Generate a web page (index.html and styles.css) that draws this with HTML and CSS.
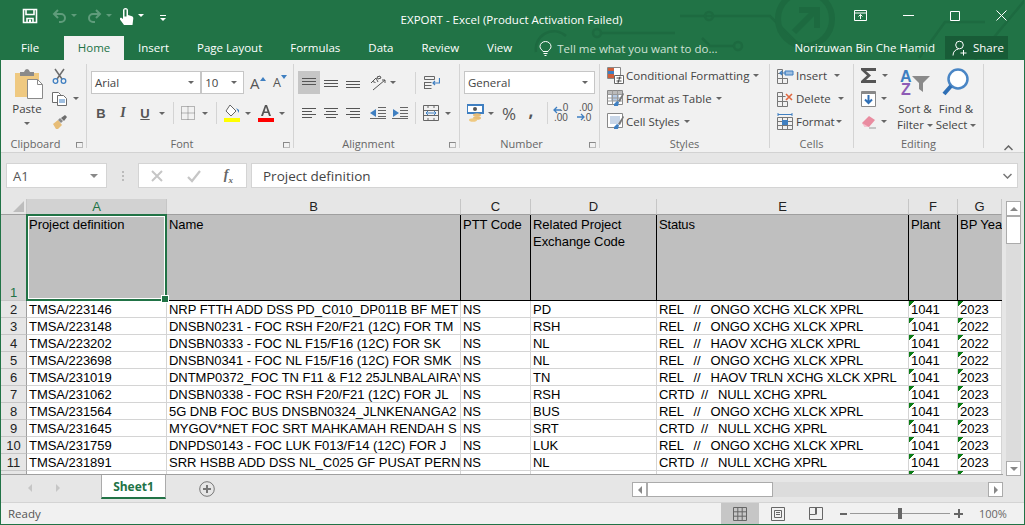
FILE: index.html
```html
<!DOCTYPE html>
<html lang="en">
<head>
  <meta charset="UTF-8">
  <title>EXPORT - Excel</title>
  <link rel="stylesheet" href="styles.css">
</head>
<body>
<div class="window">

  <!-- title bar and tabs share the green backdrop -->
  <header class="top">
    <svg class="circuit" width="1025" height="60" viewBox="0 0 1025 60" fill="none" stroke="#1d6a40" stroke-width="2.5">
      <path d="M536 52a18 18 0 0 1 30-16M600 33h75M680 16h90l30 30M737 16h-5M735 46h-25l-8-8M1025 0l-50 60M985 22h-40l-26 36" />
      <circle cx="709" cy="16" r="4"/><circle cx="738" cy="46" r="4"/><circle cx="597" cy="33" r="4"/>
      <circle cx="805" cy="19" r="27" stroke-width="6"/>
      <path d="M794 32l22-22M799 10h18v18" stroke-width="6"/>
    </svg>

    <div class="titlebar">
      <div class="qat">
        <svg class="q-save" width="16" height="16" viewBox="0 0 16 16" fill="none" stroke="#fff" stroke-width="1.6"><path d="M1.500 1.500h13v13h-13zM4 1.500v5h8v-5M5 14.500v-4h6v4"/><path d="M8 11.500v3" stroke-width="2"/></svg>
        <svg class="q-undo" width="15" height="14" viewBox="0 0 15 14" fill="none" stroke="#5f9c7b" stroke-width="2"><path d="M6 1L2 5l4 4M2 5h7a4 4 0 0 1 0 8H7"/></svg>
        <span class="caret dim"></span>
        <svg class="q-redo" width="15" height="14" viewBox="0 0 15 14" fill="none" stroke="#5f9c7b" stroke-width="2"><path d="M9 1l4 4-4 4M13 5H6a4 4 0 0 0 0 8h2"/></svg>
        <span class="caret dim"></span>
        <svg class="q-touch" width="15" height="17" viewBox="0 0 15 17" fill="#fff"><path d="M4 2.500a2.500 2.500 0 0 1 5 0V7l4 1.200q1.500.6 1.300 2.300L13.500 17H5L1 11.500q-.5-1.500 1-2l2 1.500z"/><path d="M5.500 1.500h2v7h-2z" fill="#217346"/></svg>
        <span class="caret white"></span>
        <span class="q-more"></span>
      </div>
      <div class="title">EXPORT - Excel (Product Activation Failed)</div>
      <div class="winctl">
        <svg width="13" height="11" viewBox="0 0 13 11" fill="none" stroke="#fff"><path d="M.5.500h12v10H.5zM.5 3h12M6.500 9V4.500M4.500 6.500l2-2 2 2"/></svg>
        <svg width="11" height="11" viewBox="0 0 11 11" stroke="#fff"><path d="M0 5.500h11"/></svg>
        <svg width="10" height="10" viewBox="0 0 10 10" fill="none" stroke="#fff"><path d="M.5.500h9v9h-9z"/></svg>
        <svg width="11" height="11" viewBox="0 0 11 11" stroke="#fff"><path d="M.5.500l10 10M10.500.500l-10 10"/></svg>
      </div>
    </div>

    <nav class="tabs">
      <span class="tab tab-file">File</span>
      <span class="tab tab-active">Home</span>
      <span class="tab">Insert</span>
      <span class="tab">Page Layout</span>
      <span class="tab">Formulas</span>
      <span class="tab">Data</span>
      <span class="tab">Review</span>
      <span class="tab">View</span>
      <span class="tell">
        <svg width="13" height="15" viewBox="0 0 13 15" fill="none" stroke="#fff"><path d="M4 10.500C3 8.500 1 8 1 5.500a5.500 5 0 0 1 11 0c0 2.500-2 3-3 5zM4.500 12.500h4M5.500 14.500h2"/></svg>
        Tell me what you want to do...
      </span>
      <span class="user">Norizuwan Bin Che Hamid</span>
      <span class="share">
        <svg width="16" height="16" viewBox="0 0 16 16" fill="none" stroke="#fff"><circle cx="7.500" cy="5" r="3.800"/><path d="M1 15.500c0-4 2.500-6 5.500-6.500M11.500 10v5.500M8.500 13h6"/></svg>
        Share
      </span>
    </nav>
  </header>

  <section class="ribbon">

    <div class="group g-clipboard">
      <div class="group-body clip-body">
        <div class="big paste">
          <svg width="30" height="31" viewBox="0 0 30 31"><path d="M1 5h24v24H1z" fill="#efc981"/><path d="M6 4h4q1-3 3-3t3 3h4v4H6z" fill="#8a8a8a"/><path d="M13.500 11.500h10l5 5v14h-15z" fill="#fff" stroke="#8a8a8a"/><path d="M23.500 11.500v5h5" fill="none" stroke="#8a8a8a"/></svg>
          <span class="big-text">Paste</span>
          <span class="caret"></span>
        </div>
        <div class="clip-tools">
          <div class="clip-row">
            <svg width="15" height="16" viewBox="0 0 15 16" fill="none"><path d="M3 1l7 10M12 1L5 11" stroke="#6d6d6d" stroke-width="1.500"/><circle cx="3.500" cy="13" r="2.300" stroke="#3f7fc1" stroke-width="1.300"/><circle cx="11.500" cy="13" r="2.300" stroke="#3f7fc1" stroke-width="1.300"/></svg>
          </div>
          <div class="clip-row">
            <svg width="15" height="14" viewBox="0 0 15 14" fill="#fff" stroke="#6d6d6d"><path d="M.5.500h6l2 2v8h-8z"/><path d="M5.500 3.500h6l3 3v7h-9z"/><path d="M7 8h6M7 10h6" stroke="#3f7fc1"/></svg>
            <span class="caret"></span>
          </div>
          <div class="clip-row">
            <svg width="16" height="15" viewBox="0 0 16 15"><path d="M1 10l5-4 4 5-4 4H4z" fill="#e7bd77"/><path d="M6 6l2-2 3 3-2 2z" fill="#8a8a8a"/><path d="M9 4l4-3 2 2-3 4z" fill="#6d6d6d"/></svg>
          </div>
        </div>
      </div>
      <div class="group-label"><span class="lbl">Clipboard</span><i class="launcher"></i></div>
    </div>

    <div class="group g-font">
      <div class="group-body">
        <div class="row row-top">
          <span class="combo font-name">Arial<span class="caret"></span></span>
          <span class="combo font-size">10<span class="caret"></span></span>
          <span class="grow">A<i class="up"></i></span>
          <span class="shrink">A<i class="down"></i></span>
        </div>
        <div class="row row-bottom font-tools">
          <span class="tool b">B</span>
          <span class="tool i">I</span>
          <span class="tool u">U</span>
          <span class="caret-box"><span class="caret"></span></span>
          <span class="sep sep-a"></span>
          <span class="tool">
            <svg width="14" height="14" viewBox="0 0 14 14" fill="none" stroke="#777" stroke-dasharray="1 1"><path d="M.5.500h13v13H.5zM.5 7h13M7 .5v13"/></svg>
          </span>
          <span class="caret-box"><span class="caret"></span></span>
          <span class="sep sep-b"></span>
          <span class="tool">
            <svg width="16" height="18" viewBox="0 0 16 18"><path d="M6 1l6 6-5 5-5-5z" fill="#fff" stroke="#666"/><path d="M12 4l3 2v3z" fill="#3f7fc1"/><path d="M0 14h16v4H0z" fill="#ffff00"/></svg>
          </span>
          <span class="caret-box narrow"><span class="caret"></span></span>
          <span class="tool color-a">
            <svg width="16" height="18" viewBox="0 0 16 18"><path d="M3 12L7 1h2l4 11h-2l-1-3H6l-1 3zM6.500 7.500h3L8 3z" fill="#555"/><path d="M0 14h16v4H0z" fill="#ff0000"/></svg>
          </span>
          <span class="caret-box narrow"><span class="caret"></span></span>
        </div>
      </div>
      <div class="group-label"><span class="lbl">Font</span><i class="launcher"></i></div>
    </div>

    <div class="group g-align">
      <div class="group-body">
        <div class="row row-top">
          <span class="tool tall on"><svg width="14" height="10" viewBox="0 0 14 10" stroke="#555"><path d="M0 .5h14M0 3.500h14M0 6.500h14"/></svg></span>
          <span class="tool tall"><svg width="14" height="10" viewBox="0 0 14 10" stroke="#555"><path d="M0 2.500h14M0 5.500h14M0 8.500h14"/></svg></span>
          <span class="tool tall"><svg width="14" height="10" viewBox="0 0 14 10" stroke="#555"><path d="M0 3.500h14M0 6.500h14M0 9.500h14"/></svg></span>
          <span class="tool tall orient">
            <svg width="16" height="16" viewBox="0 0 16 16" fill="none" stroke="#555"><path d="M1 8l5-5 2 4M2.500 6.500l3 1M7 2l3-1 1 2-3 1zM3 15L15 5M15 5h-3M15 5v3"/></svg>
          </span>
          <span class="caret-box small"><span class="caret"></span></span>
          <span class="sep sep-wrap"></span>
          <span class="tool tall">
            <svg width="16" height="15" viewBox="0 0 16 15" fill="none" stroke="#666"><path d="M.5 1.500h10v3H.5zM.5 7.500h7M.5 10.500h7M.5 13.500h7M.5 7v7"/><path d="M15.500 3v5H9M11 6l-2 2 2 2" stroke="#3f7fc1" stroke-width="1.200"/></svg>
          </span>
        </div>
        <div class="row row-bottom">
          <span class="tool"><svg width="14" height="11" viewBox="0 0 14 11" stroke="#555"><path d="M0 .5h14M0 3.500h10M0 6.500h14M0 9.500h10"/></svg></span>
          <span class="tool"><svg width="14" height="11" viewBox="0 0 14 11" stroke="#555"><path d="M0 .5h14M2 3.500h10M0 6.500h14M2 9.500h10"/></svg></span>
          <span class="tool"><svg width="14" height="11" viewBox="0 0 14 11" stroke="#555"><path d="M0 .5h14M4 3.500h10M0 6.500h14M4 9.500h10"/></svg></span>
          <span class="tool orient">
            <svg width="16" height="12" viewBox="0 0 16 12"><path d="M8 .5h8M8 3.500h8M8 6.500h8M8 9.500h8M0 11.500h16" stroke="#666"/><path d="M6 2v8L0 6z" fill="#3f7fc1"/></svg>
          </span>
          <span class="tool">
            <svg width="16" height="12" viewBox="0 0 16 12"><path d="M8 .5h8M8 3.500h8M8 6.500h8M8 9.500h8M0 11.500h16" stroke="#666"/><path d="M1 2v8l6-4z" fill="#3f7fc1"/></svg>
          </span>
          <span class="sep sep-merge"></span>
          <span class="tool">
            <svg width="16" height="16" viewBox="0 0 16 16" fill="none" stroke="#666"><path d="M.5.500h15v15H.5zM.5 5.500h15M.5 10.500h15M5 3V.5M11 3V.5M5 13v2.500M11 13v2.500"/><path d="M3 8h10M5 6l-2 2 2 2M11 6l2 2-2 2" stroke="#3f7fc1"/></svg>
          </span>
          <span class="caret-box"><span class="caret"></span></span>
        </div>
      </div>
      <div class="group-label"><span class="lbl">Alignment</span><i class="launcher"></i></div>
    </div>

    <div class="group g-number">
      <div class="group-body">
        <div class="row row-top">
          <span class="combo format-name">General<span class="caret"></span></span>
        </div>
        <div class="row row-bottom">
          <span class="tool">
            <svg width="17" height="18" viewBox="0 0 17 18"><path d="M0 1h16v8H0z" fill="#fff" stroke="#3f7fc1" stroke-width="2"/><circle cx="8" cy="5" r="2" fill="#555"/><ellipse cx="10" cy="11" rx="4" ry="1.800" fill="#e7bd77"/><ellipse cx="10" cy="14" rx="4" ry="1.800" fill="#e7bd77"/><ellipse cx="6" cy="16" rx="4" ry="1.800" fill="#efc981"/></svg>
          </span>
          <span class="caret-box narrow"><span class="caret"></span></span>
          <span class="tool pct">%</span>
          <span class="tool comma">,</span>
          <span class="sep sep-dec"></span>
          <span class="tool dec">
            <svg width="17" height="15" viewBox="0 0 17 15"><path d="M1 4h7M4 1L1 4l3 3" fill="none" stroke="#3f7fc1" stroke-width="1.300"/></svg>
            <span class="dec-top">.0</span><span class="dec-bot">.00</span>
          </span>
          <span class="tool dec">
            <svg width="17" height="15" viewBox="0 0 17 15"><path d="M1 11h7M5 8l3 3-3 3" fill="none" stroke="#3f7fc1" stroke-width="1.300"/></svg>
            <span class="dec-top right">.00</span><span class="dec-bot right">.0</span>
          </span>
        </div>
      </div>
      <div class="group-label"><span class="lbl">Number</span><i class="launcher"></i></div>
    </div>

    <div class="group g-styles">
      <div class="group-body stack">
        <div class="item">
          <svg width="17" height="17" viewBox="0 0 17 17"><path d="M.5.500h13v11H.5z" fill="#fff" stroke="#888"/><path d="M1 1h6v3H1z" fill="#d0603c"/><path d="M1 4h6v3H1z" fill="#3f7fc1"/><path d="M1 7h6v4H1z" fill="#d0603c"/><path d="M7.500 8.500h9v8h-9z" fill="#fff" stroke="#666"/><path d="M9.500 11h5M9.500 14h5M13 9.500l-2 6.500" stroke="#444" fill="none"/></svg>
          <span>Conditional Formatting</span><span class="caret"></span>
        </div>
        <div class="item">
          <svg width="17" height="17" viewBox="0 0 17 17"><path d="M.5.500h15v14H.5z" fill="#fff" stroke="#888"/><path d="M1 1h14v3H1z" fill="#bbb"/><path d="M4 5h8v6H4z" fill="#b7cbe4"/><path d="M.5 4.500h15M.5 8h15M.5 11h15M5.500.5v14M10.500.5v14" stroke="#999" fill="none"/><path d="M7 14l3-3 2 1-1 4H7z" fill="#3f7fc1"/><path d="M11 11l5-8 1 1-4 8z" fill="#777"/></svg>
          <span>Format as Table</span><span class="caret"></span>
        </div>
        <div class="item">
          <svg width="17" height="17" viewBox="0 0 17 17"><path d="M.5.500h15v14H.5z" fill="#fff" stroke="#888"/><path d="M3 3h10v8H3z" fill="#c8d6e8"/><path d="M7 14l3-3 2 1-1 4H7z" fill="#3f7fc1"/><path d="M11 11l5-8 1 1-4 8z" fill="#777"/></svg>
          <span>Cell Styles</span><span class="caret"></span>
        </div>
      </div>
      <div class="group-label"><span class="lbl">Styles</span></div>
    </div>

    <div class="group g-cells">
      <div class="group-body stack">
        <div class="item">
          <svg width="17" height="16" viewBox="0 0 17 16" fill="none" stroke="#777"><path d="M.5 1.500h5v4h-5zM.5 5.500h5v5h-5zM.5 10.500h5v5h-5zM5.500 10.500h5v5h-5z"/><path d="M8 3h8v4H8z" fill="#9fbfe0" stroke="#3f7fc1"/><path d="M9 5H3M5 3L3 5l2 2" stroke="#3f7fc1" stroke-width="1.200"/></svg>
          <span class="item-name ins">Insert</span><span class="caret"></span>
        </div>
        <div class="item">
          <svg width="17" height="16" viewBox="0 0 17 16" fill="none" stroke="#777"><path d="M.5 1.500h5v4h-5zM.5 5.500h5v5h-5zM.5 10.500h5v5h-5zM5.500 10.500h5v5h-5zM5.500 5.500h3"/><path d="M9 3l6 6M15 3l-6 6" stroke="#e0673f" stroke-width="1.600"/></svg>
          <span class="item-name del">Delete</span><span class="caret"></span>
        </div>
        <div class="item">
          <svg width="17" height="17" viewBox="0 0 17 17" fill="none" stroke="#777"><path d="M.5 4.500h15v12H.5zM.5 8.500h15M.5 12.500h15M5.500 4.500v12M10.500 4.500v12"/><path d="M1 1.500h14M1 0v3M15 0v3" stroke="#3f7fc1"/><path d="M5 7h6v5H5z" fill="#3f7fc1" stroke="none"/></svg>
          <span class="item-name fmt">Format</span><span class="caret"></span>
        </div>
      </div>
      <div class="group-label"><span class="lbl">Cells</span></div>
    </div>

    <div class="group g-editing">
      <div class="group-body edit-body">
        <div class="edit-tools">
          <div class="edit-row">
            <svg width="16" height="15" viewBox="0 0 16 15"><path d="M0 0h15v3H5l5 4.500L5 12h10v3H0v-2l6-5.500L0 2z" fill="#555"/></svg>
            <span class="caret"></span>
          </div>
          <div class="edit-row">
            <svg width="15" height="16" viewBox="0 0 15 16"><path d="M.5.500h14v15H.5z" fill="#fff" stroke="#888"/><path d="M1 1h13v2H1z" fill="#888"/><path d="M7.500 4v8M4 8.500l3.500 3.500L11 8.500" fill="none" stroke="#2f6fb5" stroke-width="2"/></svg>
            <span class="caret"></span>
          </div>
          <div class="edit-row">
            <svg width="15" height="14" viewBox="0 0 15 14"><path d="M1 8l7-7 6 4-6 7H4z" fill="#e98ca0"/><path d="M1 8l3 4h4" fill="#f4c3cf"/><path d="M8 13h7" stroke="#999"/></svg>
            <span class="caret"></span>
          </div>
        </div>
        <div class="big sort">
          <svg width="32" height="29" viewBox="0 0 32 29"><text class="az a-l" x="1" y="14">A</text><text class="az z-l" x="2" y="27">Z</text><path d="M13 8h18l-7 7v9l-4-3v-6z" fill="#8a8a8a"/></svg>
          <span class="big-text">Sort &amp;</span>
          <span class="big-text">Filter<span class="caret"></span></span>
        </div>
        <div class="big find">
          <svg width="28" height="28" viewBox="0 0 28 28" fill="none"><circle cx="16" cy="11" r="9.500" fill="#fff" stroke="#4a86c5" stroke-width="2.500"/><path d="M9 18l-7 8" stroke="#2f6fb5" stroke-width="4"/></svg>
          <span class="big-text">Find &amp;</span>
          <span class="big-text">Select<span class="caret"></span></span>
        </div>
      </div>
      <div class="group-label"><span class="lbl">Editing</span></div>
    </div>

    <div class="collapse">
      <svg width="9" height="6" viewBox="0 0 9 6" fill="none" stroke="#666" stroke-width="1.500"><path d="M.5 5l4-4 4 4"/></svg>
    </div>
  </section>

  <section class="formula">
    <div class="namebox">A1<span class="caret big-caret"></span></div>
    <div class="dots"></div>
    <div class="fx-buttons">
      <svg width="14" height="14" viewBox="0 0 14 14" stroke="#c6c6c6" stroke-width="2"><path d="M2 2l10 10M12 2L2 12"/></svg>
      <svg width="14" height="14" viewBox="0 0 14 14" fill="none" stroke="#c6c6c6" stroke-width="2.200"><path d="M1 8l4 4 8-10"/></svg>
      <span class="fx">f<sub>x</sub></span>
    </div>
    <div class="fx-input">
      Project definition
      <svg width="9" height="6" viewBox="0 0 9 6" fill="none" stroke="#777" stroke-width="1.500"><path d="M.5 1l4 4 4-4"/></svg>
    </div>
  </section>

  <section class="sheet">
    <div class="grid">
      <table>
        <colgroup>
          <col class="c-h"><col class="c-a"><col class="c-b"><col class="c-c"><col class="c-d"><col class="c-e"><col class="c-f"><col class="c-g">
        </colgroup>
        <thead>
          <tr>
            <th class="corner"><i></i></th>
            <th class="on">A</th><th>B</th><th>C</th><th>D</th><th>E</th><th>F</th><th>G</th>
          </tr>
        </thead>
        <tbody>
          <tr class="head-row">
            <th class="rh on">1</th>
            <td class="active">Project definition</td>
            <td>Name</td>
            <td>PTT Code</td>
            <td>Related Project<br>Exchange Code</td>
            <td>Status</td>
            <td>Plant</td>
            <td>BP Year</td>
          </tr>
          <tr><th class="rh">2</th><td>TMSA/223146</td><td>NRP FTTH ADD DSS PD_C010_DP011B BF MET</td><td>NS</td><td>PD</td><td>REL   //   ONGO XCHG XLCK XPRL</td><td class="flag">1041</td><td class="flag">2023</td></tr>
          <tr><th class="rh">3</th><td>TMSA/223148</td><td>DNSBN0231 - FOC RSH F20/F21 (12C) FOR TM</td><td>NS</td><td>RSH</td><td>REL   //   ONGO XCHG XLCK XPRL</td><td class="flag">1041</td><td class="flag">2022</td></tr>
          <tr><th class="rh">4</th><td>TMSA/223202</td><td>DNSBN0333 - FOC NL F15/F16 (12C) FOR SK</td><td>NS</td><td>NL</td><td>REL   //   HAOV XCHG XLCK XPRL</td><td class="flag">1041</td><td class="flag">2022</td></tr>
          <tr><th class="rh">5</th><td>TMSA/223698</td><td>DNSBN0341 - FOC NL F15/F16 (12C) FOR SMK</td><td>NS</td><td>NL</td><td>REL   //   ONGO XCHG XLCK XPRL</td><td class="flag">1041</td><td class="flag">2022</td></tr>
          <tr><th class="rh">6</th><td>TMSA/231019</td><td>DNTMP0372_FOC TN F11 &amp; F12 25JLNBALAIRAYA</td><td>NS</td><td>TN</td><td>REL   //   HAOV TRLN XCHG XLCK XPRL</td><td class="flag">1041</td><td class="flag">2023</td></tr>
          <tr><th class="rh">7</th><td>TMSA/231062</td><td>DNSBN0338 - FOC RSH F20/F21 (12C) FOR JL</td><td>NS</td><td>RSH</td><td>CRTD  //   NULL XCHG XPRL</td><td class="flag">1041</td><td class="flag">2023</td></tr>
          <tr><th class="rh">8</th><td>TMSA/231564</td><td>5G DNB FOC BUS DNSBN0324_JLNKENANGA2</td><td>NS</td><td>BUS</td><td>REL   //   ONGO XCHG XLCK XPRL</td><td class="flag">1041</td><td class="flag">2023</td></tr>
          <tr><th class="rh">9</th><td>TMSA/231645</td><td>MYGOV*NET FOC SRT MAHKAMAH RENDAH S</td><td>NS</td><td>SRT</td><td>CRTD  //   NULL XCHG XPRL</td><td class="flag">1041</td><td class="flag">2023</td></tr>
          <tr><th class="rh">10</th><td>TMSA/231759</td><td>DNPDS0143 - FOC LUK F013/F14 (12C) FOR J</td><td>NS</td><td>LUK</td><td>REL   //   ONGO XCHG XLCK XPRL</td><td class="flag">1041</td><td class="flag">2023</td></tr>
          <tr><th class="rh">11</th><td>TMSA/231891</td><td>SRR HSBB ADD DSS NL_C025 GF PUSAT PERN</td><td>NS</td><td>NL</td><td>CRTD  //   NULL XCHG XPRL</td><td class="flag">1041</td><td class="flag">2023</td></tr>
          <tr><th class="rh"></th><td></td><td></td><td></td><td></td><td></td><td class="flag"></td><td class="flag"></td></tr>
        </tbody>
      </table>
    </div>
    <div class="vscroll">
      <span class="sb-btn"><i class="arrow-up"></i></span>
      <span class="sb-thumb"></span>
      <span class="sb-track"></span>
      <span class="sb-btn"><i class="arrow-down"></i></span>
    </div>
  </section>

  <section class="sheetbar">
    <div class="nav-arrows"><i class="arrow-left"></i><i class="arrow-right"></i></div>
    <div class="sheet-tab">Sheet1</div>
    <div class="add-sheet">
      <svg width="16" height="16" viewBox="0 0 16 16" fill="none" stroke="#777"><circle cx="8" cy="8" r="7.300"/><path d="M8 4v8M4 8h8" stroke-width="2"/></svg>
    </div>
    <div class="hscroll">
      <span class="sb-btn"><i class="arrow-left dark"></i></span>
      <span class="sb-thumb"></span>
      <span class="sb-track"></span>
      <span class="sb-btn"><i class="arrow-right dark"></i></span>
    </div>
  </section>

  <footer class="status">
    <span class="ready">Ready</span>
    <div class="views">
      <span class="view on"><svg width="14" height="14" viewBox="0 0 14 14" fill="none" stroke="#666"><path d="M.5.500h13v13H.5zM.5 4.800h13M.5 9.200h13M4.800.5v13M9.200.5v13"/></svg></span>
      <span class="view"><svg width="14" height="14" viewBox="0 0 14 14" fill="none" stroke="#666"><path d="M.5.500h13v13H.5zM3.500 3.500h7v7h-7zM5 5.500h4M5 7.500h4"/></svg></span>
      <span class="view"><svg width="14" height="13" viewBox="0 0 14 13" fill="none" stroke="#666"><path d="M.5.500h13v12H.5zM.5 7.500h6v-7M7.500 7.500V.5"/></svg></span>
    </div>
    <div class="zoom">
      <span class="z-minus"></span>
      <span class="z-slider"><span class="z-thumb"></span></span>
      <span class="z-plus"></span>
      <span class="z-pct">100%</span>
    </div>
  </footer>
</div>
</body>
</html>
```

FILE: styles.css
```css
* {
  box-sizing: border-box;
}

html, body {
  margin: 0;
  height: 100%;
  background-color: #fff;
}

body {
  font-family: "Open Sans", sans-serif;
  font-size: 11.5px;
  color: #444;
  overflow: hidden;
}

.window {
  width: 1025px;
  height: 525px;
  border: 1px solid #217346;
  border-top: none;
  display: flex;
  flex-direction: column;
  overflow: hidden;
  background-color: #e6e6e6;
}

/* title bar */
.top {
  position: relative;
  height: 60px;
  margin: 0 -1px;
  flex: none;
  background-color: #217346;
  color: #fff;
}

.circuit {
  position: absolute;
  left: 0;
  top: 0;
}

.titlebar {
  position: relative;
  height: 36px;
}

.qat {
  position: absolute;
  left: 22px;
  top: 8px;
  display: flex;
  align-items: flex-start;
}

.q-undo { margin: 1px 0 0 14px; }
.q-redo { margin: 1px 0 0 10px; }
.q-touch { margin: 0 0 0 7px; }

.qat .caret {
  margin: 6px 0 0 4px;
}

.q-more {
  width: 6px;
  height: 6px;
  margin: 7px 0 0 16px;
  border-top: 1px solid #fff;
}

.q-more::after {
  content: "";
  display: block;
  margin-top: 2px;
  border-top: 3px solid #fff;
  border-left: 3px solid transparent;
  border-right: 3px solid transparent;
}

.title {
  position: absolute;
  left: 0;
  right: 2px;
  top: 12px;
  text-align: center;
  font-size: 11.5px;
  line-height: 16px;
}

.winctl {
  position: absolute;
  right: 18px;
  top: 10px;
  display: flex;
  align-items: center;
  gap: 36px;
}

/* tabs */
.tabs {
  position: relative;
  height: 24px;
  display: flex;
  align-items: stretch;
  white-space: nowrap;
}

.tab {
  padding: 0 14px;
  line-height: 24px;
}

.tab-file {
  padding: 0 14px 0 21px;
  width: 64px;
}

.tab-active {
  background-color: #f1f1f1;
  color: #217346;
  padding: 0;
  text-align: center;
  width: 60px;
}

.tell {
  margin-left: 13px;
  display: flex;
  align-items: center;
  gap: 5px;
  color: #cfe2d6;
}

.user {
  margin-left: auto;
  margin-right: 10px;
  line-height: 24px;
}

.share {
  width: 63px;
  height: 23px;
  margin-right: 17px;
  background-color: #185c37;
  display: flex;
  align-items: center;
  gap: 5px;
  padding-left: 7px;
}

/* ribbon */
.ribbon {
  height: 93px;
  flex: none;
  display: flex;
  align-items: flex-start;
  background-color: #f1f1f1;
  border-bottom: 1px solid #d2d2d2;
  padding-top: 4px;
}

.group {
  height: 84px;
  flex: none;
  display: flex;
  flex-direction: column;
  border-right: 1px solid #d4d4d4;
}

.group-body {
  flex: 1;
  min-height: 0;
  padding-top: 7px;
}

.group-label {
  height: 14px;
  display: flex;
  color: #666;
  font-size: 11px;
}

.lbl {
  flex: 1;
  text-align: center;
  line-height: 20px;
}

.launcher {
  flex: none;
  margin: 8px 3px 0 6px;
  width: 7px;
  height: 6px;
  border-left: 1px solid #888;
  border-top: 1px solid #888;
  border-right: 1px solid #bbb;
  border-bottom: 1px solid #bbb;
}

.row {
  display: flex;
  align-items: center;
}

.row-top {
  height: 23px;
}

.row-bottom {
  height: 22px;
  margin-top: 8px;
}

.caret {
  display: inline-block;
  width: 0;
  height: 0;
  border-top: 3px solid #666;
  border-left: 3px solid transparent;
  border-right: 3px solid transparent;
  flex: none;
}

.caret.dim {
  border-top-color: #5f9c7b;
}

.caret.white {
  border-top-color: #fff;
}

.caret-box {
  width: 12px;
  display: flex;
  justify-content: center;
  flex: none;
}

.caret-box.narrow {
  width: 10px;
}

.caret-box.small {
  width: 8px;
}

.tool {
  width: 22px;
  height: 22px;
  flex: none;
  display: flex;
  align-items: center;
  justify-content: center;
}

.tool.tall {
  height: 23px;
}

.tool.on {
  background-color: #c6c6c6;
}

.sep {
  width: 1px;
  height: 22px;
  background-color: #d4d4d4;
  flex: none;
}

.combo {
  height: 23px;
  background-color: #fff;
  border: 1px solid #c6c6c6;
  display: flex;
  align-items: center;
  justify-content: space-between;
  padding: 0 6px 0 3px;
}

/* clipboard */
.g-clipboard {
  width: 86px;
}

.clip-body {
  display: flex;
  padding-top: 0;
  padding-left: 7px;
}

.big {
  display: flex;
  flex-direction: column;
  align-items: center;
}

.big-text {
  line-height: 16px;
  white-space: nowrap;
}

.big-text .caret {
  margin-left: 3px;
  vertical-align: 2px;
}

.paste {
  width: 38px;
  padding-top: 4px;
}

.paste svg {
  margin: 0 0 2px 4px;
}

.paste .caret {
  margin-top: 5px;
}

.clip-tools {
  margin-left: 4px;
}

.clip-row {
  height: 23px;
  display: flex;
  align-items: center;
  gap: 6px;
  padding-left: 2px;
}

/* font */
.g-font {
  width: 207px;
}

.g-font .row-top {
  padding-left: 4px;
}

.font-name {
  width: 111px;
}

.font-size {
  width: 43px;
}

.grow, .shrink {
  color: #555;
  flex: none;
}

.grow {
  margin-left: 6px;
  width: 23px;
  font-size: 15px;
}

.shrink {
  width: 20px;
  font-size: 12.5px;
}

.grow i, .shrink i {
  display: inline-block;
  width: 0;
  height: 0;
  vertical-align: 8px;
  border-left: 3px solid transparent;
  border-right: 3px solid transparent;
}

.grow .up {
  border-bottom: 4px solid #3f7fc1;
}

.shrink .down {
  border-top: 4px solid #3f7fc1;
}

.font-tools {
  padding-left: 3px;
}

.tool.b, .tool.i, .tool.u {
  font-family: "Liberation Sans", sans-serif;
  font-size: 13px;
  color: #555;
}

.tool.b { font-weight: bold; }
.tool.i { font-style: italic; font-family: "Liberation Serif", serif; font-size: 14px; font-weight: bold; }
.tool.u { text-decoration: underline; font-weight: bold; }

.sep-a { margin: 0 3px 0 5px; }
.sep-b { margin: 0 4px 0 5px; }
.color-a { margin-left: 2px; }

/* alignment */
.g-align {
  width: 166px;
}

.g-align .row {
  padding-left: 4px;
}

.orient {
  margin-left: 3px;
}

.sep-wrap {
  margin: 0 5px 0 18px;
}

.sep-merge {
  margin: 0 4px;
}

/* number */
.g-number {
  width: 140px;
}

.g-number .row {
  padding-left: 4px;
}

.format-name {
  width: 131px;
}

.pct {
  font-size: 17px;
  color: #555;
  margin-left: 2px;
}

.comma {
  font-size: 17px;
  font-weight: bold;
  color: #555;
  padding-bottom: 6px;
}

.sep-dec {
  margin: 0 2px 0 5px;
}

.dec {
  position: relative;
  font-family: "Liberation Sans", sans-serif;
  font-size: 10px;
  line-height: 10px;
  color: #555;
}

.dec + .dec {
  margin-left: 1px;
}

.dec-top, .dec-bot {
  position: absolute;
  left: 10px;
}

.dec-top { top: 1px; }
.dec-bot { top: 11px; left: 4px; }
.dec-top.right { left: 6px; }
.dec-bot.right { left: 10px; }

/* styles and cells */
.stack {
  padding-top: 0;
}

.item {
  height: 23px;
  display: flex;
  align-items: center;
  white-space: nowrap;
  padding-left: 7px;
  gap: 2px;
}

.item .caret {
  margin-left: 2px;
}

.g-styles {
  width: 170px;
}

.g-cells {
  width: 84px;
}

.item-name {
  flex: none;
}

.ins { width: 34px; }
.del { width: 38px; }
.fmt { width: 36px; }

/* editing */
.g-editing {
  width: 130px;
}

.edit-body {
  display: flex;
  padding-top: 0;
}

.edit-tools {
  padding-left: 7px;
  width: 41px;
}

.edit-row {
  height: 23px;
  display: flex;
  align-items: center;
  gap: 5px;
}

.sort {
  width: 40px;
  padding-top: 4px;
}

.sort svg {
  margin-bottom: 4px;
}

.find {
  width: 42px;
  padding-top: 4px;
}

.find svg {
  margin-bottom: 5px;
}

.az {
  font-family: "Liberation Sans", sans-serif;
  font-size: 16px;
  font-weight: bold;
}

.a-l { fill: #3f7fc1; }
.z-l { fill: #8e5bb5; }

.collapse {
  flex: 1;
  text-align: right;
  padding: 75px 11px 0 0;
  height: 88px;
}

/* formula bar */
.formula {
  height: 46px;
  flex: none;
  display: flex;
  padding: 10px 6px 0 5px;
}

.namebox, .fx-buttons, .fx-input {
  height: 25px;
  padding-top: 1px;
  background-color: #fff;
  border: 1px solid #d4d4d4;
  display: flex;
  align-items: center;
}

.namebox {
  width: 101px;
  padding: 1px 8px 0 6px;
  justify-content: space-between;
  color: #555;
  font-size: 13px;
}

.big-caret {
  border-top-width: 4px;
  border-left-width: 4px;
  border-right-width: 4px;
  border-top-color: #888;
}

.dots {
  width: 2px;
  height: 10px;
  margin: 8px 14px 0 15px;
  background-image: linear-gradient(#bbb 2px, transparent 2px);
  background-size: 2px 4px;
}

.fx-buttons {
  width: 109px;
  padding: 0 13px 0 11px;
  justify-content: space-between;
  margin-right: 4px;
}

.fx {
  font-family: "Liberation Serif", serif;
  font-style: italic;
  font-size: 14px;
  font-weight: bold;
  color: #666;
}

.fx sub {
  font-size: 9px;
}

.fx-input {
  flex: 1;
  padding: 1px 5px 0 11px;
  justify-content: space-between;
  font-size: 13.5px;
}

/* sheet */
.sheet {
  height: 276px;
  flex: none;
  display: flex;
}

.grid {
  width: 1002px;
  height: 276px;
  flex: none;
  overflow: hidden;
  border-bottom: 1px solid #a0a0a0;
  font-family: "Liberation Sans", sans-serif;
  font-size: 13px;
}

table {
  table-layout: fixed;
  border-collapse: separate;
  border-spacing: 0;
  width: 1001px;
  background-color: #fff;
  color: #000;
}

.c-h { width: 26px; }
.c-a { width: 140px; }
.c-b { width: 294px; }
.c-c { width: 70px; }
.c-d { width: 126px; }
.c-e { width: 252px; }
.c-f { width: 49px; }
.c-g { width: 44px; }

thead th {
  height: 16px;
  padding: 0;
  font-weight: normal;
  font-size: 13px;
  line-height: 15px;
  text-align: center;
  background-color: #e6e6e6;
  border-right: 1px solid #c6c6c6;
  border-bottom: 1px solid #9f9f9f;
  color: #222;
}

thead th.on {
  background-color: #d2d2d2;
  color: #217346;
}

.corner {
  vertical-align: bottom;
}

.corner i {
  display: block;
  width: 0;
  height: 0;
  margin: 0 2px 2px auto;
  border-bottom: 11px solid #bdbdbd;
  border-left: 11px solid transparent;
}

.rh {
  height: 17px;
  padding: 1px 0 0;
  font-weight: normal;
  font-size: 13px;
  line-height: 15px;
  text-align: center;
  background-color: #e6e6e6;
  border-right: 1px solid #9f9f9f;
  border-bottom: 1px solid #c6c6c6;
  color: #222;
}

.rh.on {
  background-color: #d2d2d2;
  color: #217346;
  vertical-align: bottom;
}

td {
  height: 17px;
  padding: 1px 0 0 2px;
  line-height: 15px;
  letter-spacing: -0.04px;
  white-space: pre;
  overflow: hidden;
  border-right: 1px solid #d4d4d4;
  border-bottom: 1px solid #d4d4d4;
  vertical-align: middle;
}

/* status column runs tighter in the reference's rendering */
td:nth-child(6) {
  letter-spacing: -0.19px;
}

.head-row td, .head-row .rh {
  height: 86px;
}

.head-row td {
  background-color: #bfbfbf;
  border-right: 1px solid #000;
  border-bottom: 1px solid #000;
  vertical-align: top;
  line-height: 17px;
}

.head-row td:last-child {
  border-right: none;
}

/* green error marks are drawn in the cell's corner */
.flag {
  background-image: linear-gradient(135deg, #0b7d16 4px, transparent 4px);
  background-repeat: no-repeat;
  background-size: 7px 7px;
}

.head-row td.active {
  position: relative;
  overflow: visible;
  border-right-color: #bfbfbf;
}

.active::before {
  content: "";
  position: absolute;
  left: -1px;
  top: -1px;
  right: -1px;
  bottom: -1px;
  border: 2px solid #217346;
  box-shadow: inset 0 0 0 1px #fff;
}

.active::after {
  content: "";
  position: absolute;
  right: -3px;
  bottom: -3px;
  width: 6px;
  height: 6px;
  background-color: #217346;
  border: 1px solid #fff;
}

/* scroll bars */
.vscroll {
  width: 21px;
  height: 277px;
  flex: none;
  padding: 2px 3px 0;
  display: flex;
  flex-direction: column;
}

.vscroll .sb-thumb {
  height: 28px;
}

.sb-btn {
  width: 15px;
  height: 15px;
  flex: none;
  background-color: #fff;
  border: 1px solid #ababab;
  display: flex;
  align-items: center;
  justify-content: center;
}

.sb-thumb {
  flex: none;
  background-color: #fff;
  border: 1px solid #ababab;
}

.sb-track {
  flex: 1;
  background-color: #dcdcdc;
}

.arrow-up, .arrow-down, .arrow-left, .arrow-right {
  display: block;
  width: 0;
  height: 0;
  border-style: solid;
  border-color: transparent;
}

.arrow-up {
  border-width: 0 4px 4px;
  border-bottom-color: #888;
}

.arrow-down {
  border-width: 4px 4px 0;
  border-top-color: #888;
}

.arrow-left {
  border-width: 4px 4px 4px 0;
  border-right-color: #c6c6c6;
}

.arrow-right {
  border-width: 4px 0 4px 4px;
  border-left-color: #c6c6c6;
}

.arrow-left.dark {
  border-right-color: #888;
}

.arrow-right.dark {
  border-left-color: #888;
}

.sheetbar {
  height: 27px;
  flex: none;
  display: flex;
  align-items: flex-start;
}

.nav-arrows {
  width: 100px;
  display: flex;
  gap: 24px;
  padding: 9px 0 0 27px;
}

.sheet-tab {
  width: 65px;
  height: 24px;
  background-color: #fff;
  border: 1px solid #ababab;
  border-top: none;
  border-bottom: 2px solid #217346;
  color: #217346;
  font-weight: bold;
  font-size: 12px;
  text-align: center;
  line-height: 24px;
}

.add-sheet {
  margin: 6px 0 0 33px;
  height: 16px;
}

.hscroll {
  margin: 7px 0 0 417px;
  width: 371px;
  height: 15px;
  display: flex;
}

.hscroll .sb-thumb {
  width: 126px;
}

.status {
  flex: 1;
  display: flex;
  align-items: stretch;
  background-color: #f1f1f1;
  border-top: 1px solid #d4d4d4;
}

.ready {
  line-height: 21px;
  padding-left: 7px;
  width: 720px;
  color: #555;
}

.views {
  display: flex;
}

.view {
  width: 38px;
  display: flex;
  align-items: center;
  justify-content: center;
}

.view.on {
  background-color: #c6c6c6;
}

.zoom {
  display: flex;
  align-items: center;
  margin-left: 5px;
  color: #666;
}

.z-minus {
  width: 7px;
  height: 2px;
  background-color: #666;
}

.z-slider {
  width: 100px;
  height: 1px;
  background-color: #999;
  margin: 0 4px 0 3px;
  display: flex;
  justify-content: center;
  align-items: center;
}

.z-thumb {
  width: 4px;
  height: 11px;
  background-color: #666;
  flex: none;
}

.z-plus {
  width: 9px;
  height: 9px;
  background-image: linear-gradient(#666, #666), linear-gradient(#666, #666);
  background-size: 9px 2px, 2px 9px;
  background-position: center;
  background-repeat: no-repeat;
}

.z-pct {
  margin-left: 16px;
  font-size: 11px;
}
```
